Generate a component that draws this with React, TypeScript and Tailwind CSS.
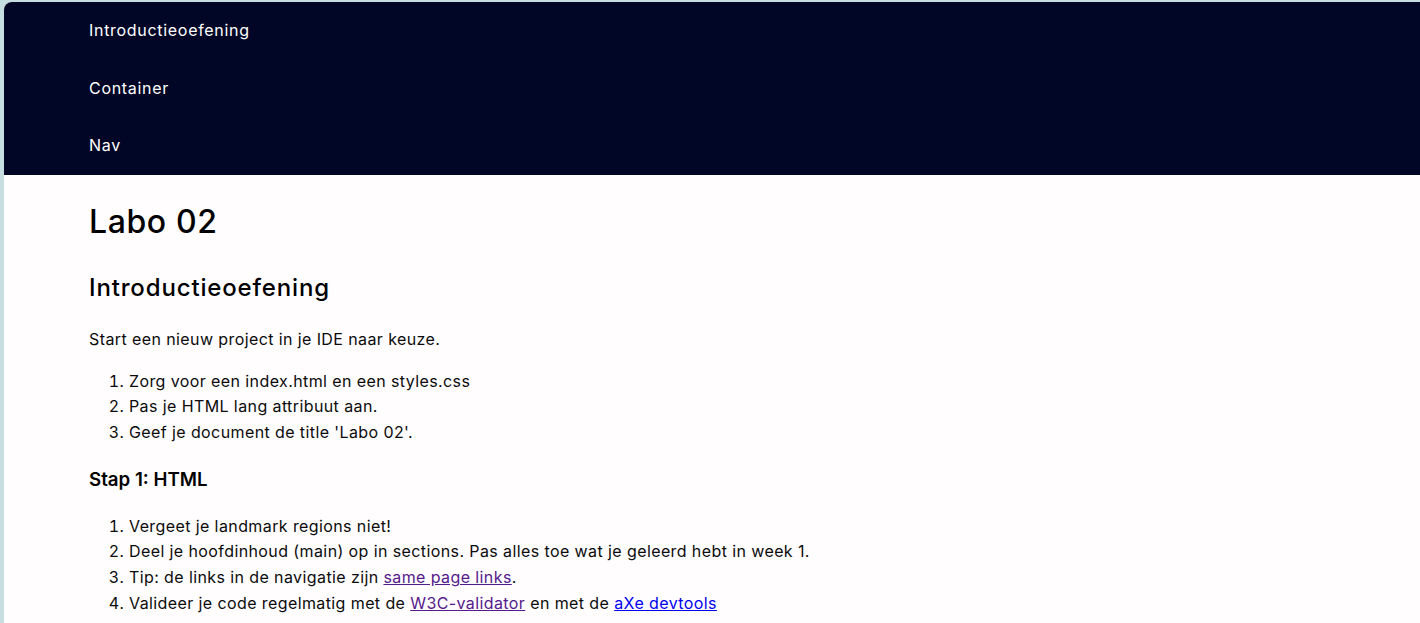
const navItems = ["Introductieoefening", "Container", "Nav"];

export default function App() {
  return (
    <div
      className="min-h-[623px] bg-[#c6dde1] pt-[2px] pl-[4px] text-[#0b0b0b] tracking-[0.4px]"
      style={{ fontFamily: "Inter, 'Open Sans', sans-serif" }}
    >
      <div className="min-h-[621px] bg-[#fffdfe] rounded-tl-[8px] overflow-hidden">
        <header className="bg-[#020626]">
          <nav>
            <ul className="pl-[85px]">
              {navItems.map((item) => (
                <li key={item} className="py-4 text-[16px] leading-[25.6px] text-white tracking-[0.7px]">
                  <a href="#">{item}</a>
                </li>
              ))}
            </ul>
          </nav>
        </header>
        <main className="pl-[85px] pt-[28px] pb-10">
          <h1 className="text-[32px] leading-[38.4px] font-medium text-black tracking-[0.6px]">Labo 02</h1>
          <section>
            <h2 className="mt-[33px] text-[24px] leading-[28.8px] font-medium text-black tracking-[0.85px]">
              Introductieoefening
            </h2>
            <p className="mt-[24px] text-[16px] leading-[25.6px]">
              Start een nieuw project in je IDE naar keuze.
            </p>
            <ol className="mt-4 list-decimal pl-10 text-[16px] leading-[25.6px]">
              <li>Zorg voor een index.html en een styles.css</li>
              <li>Pas je HTML lang attribuut aan.</li>
              <li>Geef je document de title 'Labo 02'.</li>
            </ol>
          </section>
          <section>
            <h3 className="mt-[24px] text-[18.7px] leading-[22.5px] font-semibold text-black tracking-[0px]">
              Stap 1: HTML
            </h3>
            <ol className="mt-[22px] list-decimal pl-10 text-[16px] leading-[25.6px]">
              <li>Vergeet je landmark regions niet!</li>
              <li>Deel je hoofdinhoud (main) op in sections. Pas alles toe wat je geleerd hebt in week 1.</li>
              <li>
                Tip: de links in de navigatie zijn{" "}
                <a href="#" className="text-[#551a8b] underline">same page links</a>.
              </li>
              <li>
                Valideer je code regelmatig met de{" "}
                <a href="#" className="text-[#551a8b] underline">W3C-validator</a> en met de{" "}
                <a href="#" className="text-[#0000ee] underline">aXe devtools</a>
              </li>
            </ol>
          </section>
        </main>
      </div>
    </div>
  );
}
